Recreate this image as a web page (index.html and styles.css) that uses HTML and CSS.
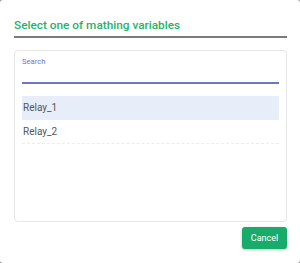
FILE: index.html
```html
<!DOCTYPE html>
<html lang="en">
<head>
  <meta charset="UTF-8">
  <title>Select variable</title>
  <link rel="stylesheet" href="styles.css">
</head>
<body>
  <div class="dialog">
    <div class="dialog-title">Select one of mathing variables</div>

    <div class="picker">
      <div class="search-field">
        <label class="search-label">Search</label>
        <div class="search-input"></div>
      </div>
      <ul class="var-list">
        <li class="var-item selected">Relay_1</li>
        <li class="var-item">Relay_2</li>
      </ul>
    </div>

    <div class="dialog-actions">
      <button class="btn-cancel">Cancel</button>
    </div>
  </div>
</body>
</html>
```

FILE: styles.css
```css
html, body {
  margin: 0;
  padding: 0;
  height: 100%;
  background: #9a9a9a;
}

body {
  font-family: Roboto, "Liberation Sans", sans-serif;
}

.dialog {
  box-sizing: border-box;
  height: 263px;
  background: #fff;
  border-radius: 3px;
  padding: 16px 13px 0 14px;
}

.dialog-title {
  color: #1fb36c;
  font-size: 11.8px;
  font-weight: 500;
  line-height: 18px;
  padding-bottom: 2px;
  border-bottom: 2px solid #7a7a7a;
}

.picker {
  margin-top: 12px;
  height: 172px;
  box-sizing: border-box;
  border: 1px solid #e6e6e6;
  border-radius: 4px;
  padding: 5px 7px 0 7px;
}

.search-field {
  display: flex;
  flex-direction: column;
}

.search-label {
  font-size: 7.6px;
  line-height: 11px;
  color: #6a73d8;
}

.search-input {
  height: 15px;
  border-bottom: 2px solid #6b76c6;
}

.var-list {
  list-style: none;
  margin: 12px 0 0 0;
  padding: 0;
}

.var-item {
  height: 24px;
  line-height: 24px;
  box-sizing: border-box;
  padding-left: 1px;
  font-size: 10px;
  color: #555;
  border-bottom: 1px dashed #ececec;
}

.var-item.selected {
  background: #e7eefa;
}

.dialog-actions {
  display: flex;
  justify-content: flex-end;
  margin-top: 5px;
}

.btn-cancel {
  width: 45px;
  height: 22px;
  border: none;
  border-radius: 3px;
  background: #19ab69;
  color: #fff;
  font-family: Roboto, "Liberation Sans", sans-serif;
  font-size: 9px;
  padding: 0;
  box-shadow: 0 1px 3px rgba(0, 0, 0, 0.25);
}
```
